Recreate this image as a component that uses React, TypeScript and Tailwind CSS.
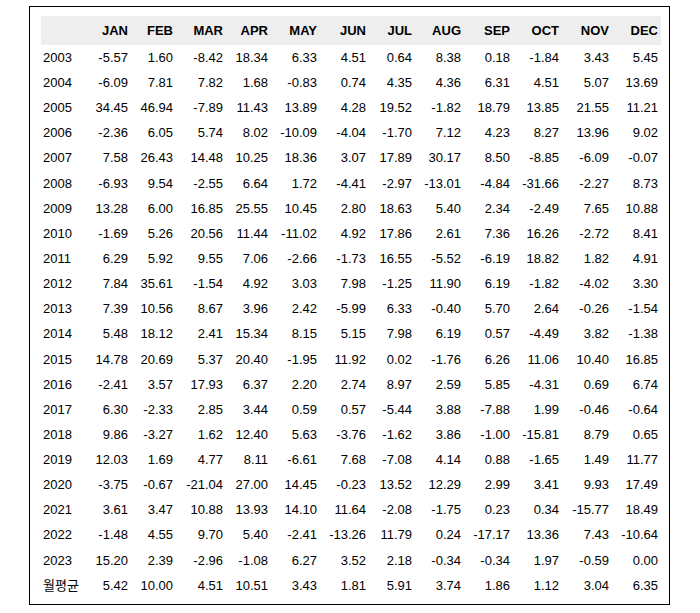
import React from 'react';

const MONTHS = ['JAN', 'FEB', 'MAR', 'APR', 'MAY', 'JUN', 'JUL', 'AUG', 'SEP', 'OCT', 'NOV', 'DEC'];

// monthly returns (%) per year, last row is the monthly average
const ROWS: [string, string][] = [
  ['2003', '-5.57 1.60 -8.42 18.34 6.33 4.51 0.64 8.38 0.18 -1.84 3.43 5.45'],
  ['2004', '-6.09 7.81 7.82 1.68 -0.83 0.74 4.35 4.36 6.31 4.51 5.07 13.69'],
  ['2005', '34.45 46.94 -7.89 11.43 13.89 4.28 19.52 -1.82 18.79 13.85 21.55 11.21'],
  ['2006', '-2.36 6.05 5.74 8.02 -10.09 -4.04 -1.70 7.12 4.23 8.27 13.96 9.02'],
  ['2007', '7.58 26.43 14.48 10.25 18.36 3.07 17.89 30.17 8.50 -8.85 -6.09 -0.07'],
  ['2008', '-6.93 9.54 -2.55 6.64 1.72 -4.41 -2.97 -13.01 -4.84 -31.66 -2.27 8.73'],
  ['2009', '13.28 6.00 16.85 25.55 10.45 2.80 18.63 5.40 2.34 -2.49 7.65 10.88'],
  ['2010', '-1.69 5.26 20.56 11.44 -11.02 4.92 17.86 2.61 7.36 16.26 -2.72 8.41'],
  ['2011', '6.29 5.92 9.55 7.06 -2.66 -1.73 16.55 -5.52 -6.19 18.82 1.82 4.91'],
  ['2012', '7.84 35.61 -1.54 4.92 3.03 7.98 -1.25 11.90 6.19 -1.82 -4.02 3.30'],
  ['2013', '7.39 10.56 8.67 3.96 2.42 -5.99 6.33 -0.40 5.70 2.64 -0.26 -1.54'],
  ['2014', '5.48 18.12 2.41 15.34 8.15 5.15 7.98 6.19 0.57 -4.49 3.82 -1.38'],
  ['2015', '14.78 20.69 5.37 20.40 -1.95 11.92 0.02 -1.76 6.26 11.06 10.40 16.85'],
  ['2016', '-2.41 3.57 17.93 6.37 2.20 2.74 8.97 2.59 5.85 -4.31 0.69 6.74'],
  ['2017', '6.30 -2.33 2.85 3.44 0.59 0.57 -5.44 3.88 -7.88 1.99 -0.46 -0.64'],
  ['2018', '9.86 -3.27 1.62 12.40 5.63 -3.76 -1.62 3.86 -1.00 -15.81 8.79 0.65'],
  ['2019', '12.03 1.69 4.77 8.11 -6.61 7.68 -7.08 4.14 0.88 -1.65 1.49 11.77'],
  ['2020', '-3.75 -0.67 -21.04 27.00 14.45 -0.23 13.52 12.29 2.99 3.41 9.93 17.49'],
  ['2021', '3.61 3.47 10.88 13.93 14.10 11.64 -2.08 -1.75 0.23 0.34 -15.77 18.49'],
  ['2022', '-1.48 4.55 9.70 5.40 -2.41 -13.26 11.79 0.24 -17.17 13.36 7.43 -10.64'],
  ['2023', '15.20 2.39 -2.96 -1.08 6.27 3.52 2.18 -0.34 -0.34 1.97 -0.59 0.00'],
  ['월평균', '5.42 10.00 4.51 10.51 3.43 1.81 5.91 3.74 1.86 1.12 3.04 6.35'],
];

const cols = 'grid grid-cols-[45px_45px_45px_50px_45px_49px_49px_46px_49px_49px_49px_50px_49px]';

export default function App() {
  return (
    <div className="w-[700px] h-[613px] bg-white pt-[6px] pl-[29px] text-[13px] text-black font-['Liberation_Sans','Noto_Sans_CJK_KR',sans-serif]">
      <div className="w-[641px] h-[599px] border border-black pt-[9px] pl-[11px]">
        <div className="w-[620px]">
          {/* header */}
          <div className={`${cols} h-[29px] items-center bg-[#eeeeee] font-bold`}>
            <div />
            {MONTHS.map((m) => (
              <div key={m} className="text-right pr-[3px]">
                {m}
              </div>
            ))}
          </div>

          {ROWS.map(([year, values]) => (
            <div key={year} className={`${cols} h-[25.15px] items-center`}>
              <div className="pl-[2px]">{year}</div>
              {values.split(' ').map((v, i) => (
                <div key={i} className="text-right pr-[3px]">
                  {v}
                </div>
              ))}
            </div>
          ))}
        </div>
      </div>
    </div>
  );
}
